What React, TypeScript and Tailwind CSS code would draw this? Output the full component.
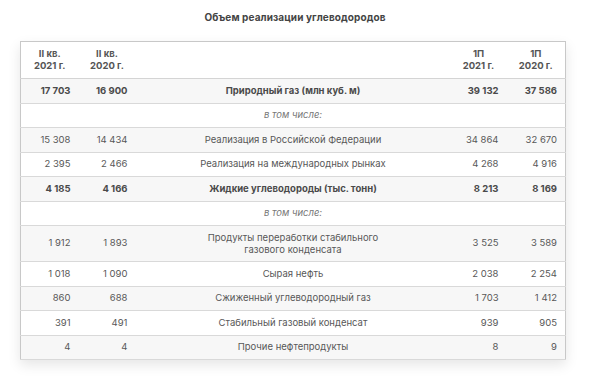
import React from 'react';

type Row = {
  q21?: string;
  q20?: string;
  label: string;
  h21?: string;
  h20?: string;
  bold?: boolean;
  note?: boolean;
};

const rows: Row[] = [
  { q21: '17 703', q20: '16 900', label: 'Природный газ (млн куб. м)', h21: '39 132', h20: '37 586', bold: true },
  { label: 'в том числе:', note: true },
  { q21: '15 308', q20: '14 434', label: 'Реализация в Российской Федерации', h21: '34 864', h20: '32 670' },
  { q21: '2 395', q20: '2 466', label: 'Реализация на международных рынках', h21: '4 268', h20: '4 916' },
  { q21: '4 185', q20: '4 166', label: 'Жидкие углеводороды (тыс. тонн)', h21: '8 213', h20: '8 169', bold: true },
  { label: 'в том числе:', note: true },
  { q21: '1 912', q20: '1 893', label: 'Продукты переработки стабильного газового конденсата', h21: '3 525', h20: '3 589' },
  { q21: '1 018', q20: '1 090', label: 'Сырая нефть', h21: '2 038', h20: '2 254' },
  { q21: '860', q20: '688', label: 'Сжиженный углеводородный газ', h21: '1 703', h20: '1 412' },
  { q21: '391', q20: '491', label: 'Стабильный газовый конденсат', h21: '939', h20: '905' },
  { q21: '4', q20: '4', label: 'Прочие нефтепродукты', h21: '8', h20: '9' },
];

export default function App() {
  return (
    <div className="w-[590px] h-[379px] bg-white text-[#585858] font-['Inter',sans-serif] overflow-hidden">
      <h2 className="pt-[10px] h-[41px] text-center text-[10px] font-bold text-[#444] tracking-[0.1px]">
        Объем реализации углеводородов
      </h2>
      <div className="ml-[20px] w-[546px] shadow-[0_5px_12px_rgba(0,0,0,0.1)]">
        <table className="w-full border-collapse border border-[#c8c8c8] text-[9.5px] table-fixed">
          <colgroup>
            <col className="w-[58px]" />
            <col className="w-[57px]" />
            <col />
            <col className="w-[56px]" />
            <col className="w-[59px]" />
          </colgroup>
          <thead>
            <tr className="h-[37px] border-b border-[#d4d4d4] bg-white">
              <th className="text-center font-bold leading-[12px] text-[#555]">II кв.<br />2021 г.</th>
              <th className="text-center font-bold leading-[12px] text-[#555]">II кв.<br />2020 г.</th>
              <th />
              <th className="text-center font-bold leading-[12px] text-[#555]">1П<br />2021 г.</th>
              <th className="text-center font-bold leading-[12px] text-[#555]">1П<br />2020 г.</th>
            </tr>
          </thead>
          <tbody>
            {rows.map((r, i) => (
              <tr
                key={i}
                className={`border-b border-[#d9d9d9] ${i % 2 === 0 ? 'bg-[#f7f7f7]' : 'bg-white'} ${r.label.length > 40 ? 'h-[36px]' : 'h-[24.5px]'} ${r.bold ? 'font-bold text-[#4a4a4a]' : ''}`}
              >
                <td className="text-right pr-[8px]">{r.q21}</td>
                <td className="text-right pr-[8px]">{r.q20}</td>
                {r.note ? (
                  <td className="text-center italic text-[9.5px] text-[#777]">{r.label}</td>
                ) : (
                  <td className="text-center leading-[12px] px-[60px]">{r.label}</td>
                )}
                <td className="text-right pr-[8px]">{r.h21}</td>
                <td className="text-right pr-[8px]">{r.h20}</td>
              </tr>
            ))}
          </tbody>
        </table>
      </div>
    </div>
  );
}
